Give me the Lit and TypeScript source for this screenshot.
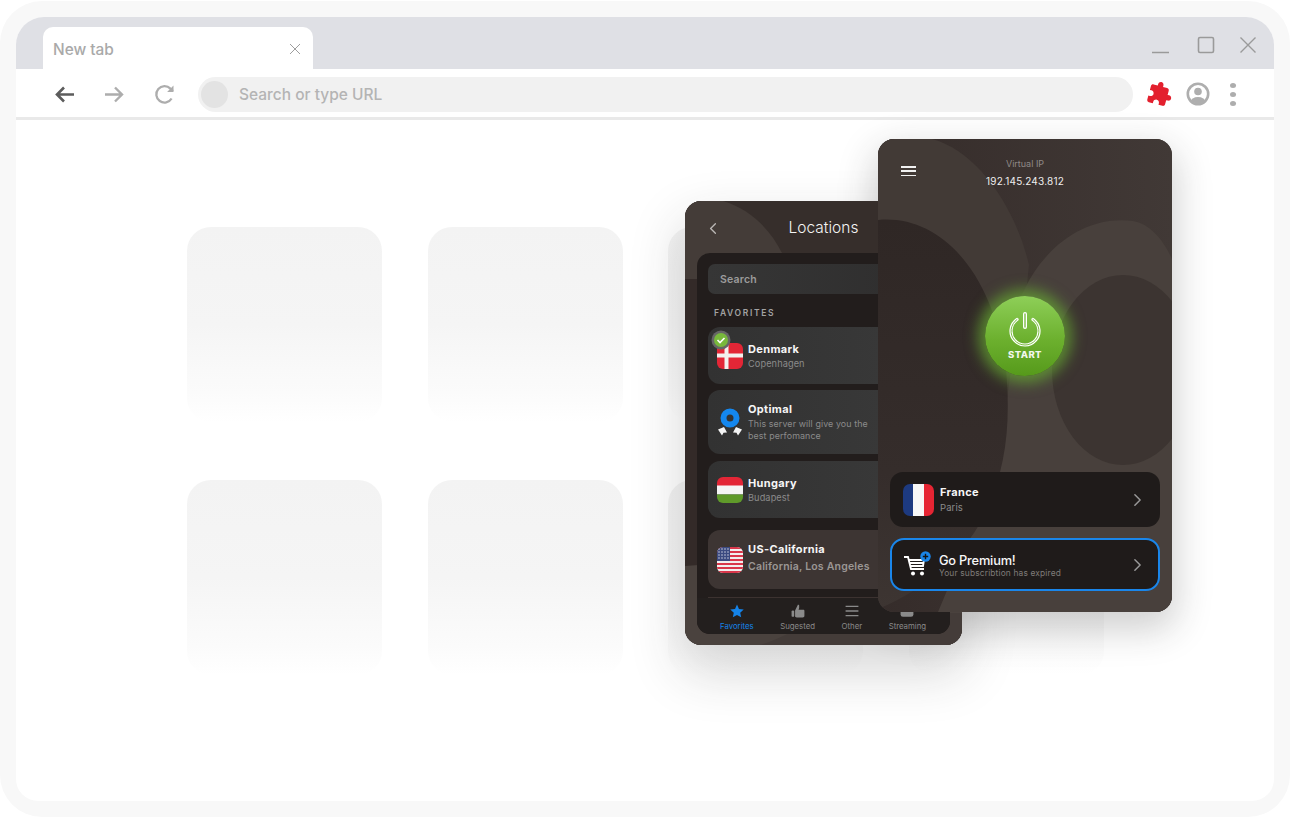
import { LitElement, html, css, svg } from "lit";
import { customElement } from "lit/decorators.js";

const chevron = (cls: string) => html`<svg class=${cls} viewBox="0 0 10 16" fill="none" stroke="currentColor" stroke-width="1.7" stroke-linecap="round" stroke-linejoin="round"><path d="M2 2l6 6-6 6"/></svg>`;

const flagDk = html`<svg class="flag" viewBox="0 0 26 26"><defs><clipPath id="fd"><rect width="26" height="26" rx="6"/></clipPath></defs><g clip-path="url(#fd)"><rect width="26" height="26" fill="#e32636"/><rect x="7.5" width="4" height="26" fill="#f3f0ee"/><rect y="10.5" width="26" height="4" fill="#f3f0ee"/></g></svg>`;
const flagHu = html`<svg class="flag" viewBox="0 0 26 26"><defs><clipPath id="fh"><rect width="26" height="26" rx="6"/></clipPath></defs><g clip-path="url(#fh)"><rect width="26" height="9" fill="#e32636"/><rect y="8.5" width="26" height="9" fill="#f5f5f5"/><rect y="17.5" width="26" height="9" fill="#5f9a2a"/></g></svg>`;
const flagUs = html`<svg class="flag" viewBox="0 0 26 26"><defs><clipPath id="fu"><rect width="26" height="26" rx="6"/></clipPath></defs><g clip-path="url(#fu)"><rect width="26" height="26" fill="#f1eeee"/>${[0, 4, 8, 12, 16, 20, 24].map((y) => svg`<rect y=${y} width="26" height="2" fill="#d9364a"/>`)}<rect width="13" height="14" fill="#3b4a80"/>${[2, 5, 8, 11].map((y) => [2, 5, 8, 11].map((x) => svg`<circle cx=${x} cy=${y} r=".7" fill="#e6e6ee"/>`))}</g></svg>`;
const flagFr = html`<svg class="flag-lg" viewBox="0 0 31 32"><defs><clipPath id="ff"><rect width="31" height="32" rx="7"/></clipPath></defs><g clip-path="url(#ff)"><rect width="10" height="32" fill="#1d3a80"/><rect x="10" width="11" height="32" fill="#f7f7f7"/><rect x="21" width="10" height="32" fill="#e62533"/></g></svg>`;

@customElement("app-root")
export class AppRoot extends LitElement {
  static styles = css`
    :host { display: block; width: 1290px; height: 817px; background: #fff; overflow: hidden; font-family: Inter, "Liberation Sans", sans-serif; }
    .frame { box-sizing: border-box; margin-top: 1px; height: 816px; padding: 16px 16px 16px; background: #f8f8f8; border-radius: 42px; }
    .window { height: 784px; background: #fff; border-radius: 28px 28px 22px 22px; overflow: hidden; display: flex; flex-direction: column; }

    .strip { height: 52px; flex: none; box-sizing: border-box; background: #dfe0e5; padding: 10px 0 0 27px; display: flex; }
    .tab { width: 270px; height: 42px; box-sizing: border-box; background: #fff; border-radius: 10px 10px 0 0; display: flex; align-items: center; justify-content: space-between; padding: 2px 11px 0 10px; color: #a9a9a9; font-size: 15.4px; font-weight: 500; }
    .tab svg { width: 14px; height: 14px; }
    .controls { margin-left: auto; display: flex; align-items: flex-start; color: #9a9a9a; padding: 9px 17px 0 0; gap: 27px; }
    .controls svg { display: block; }
    .ctl-min { width: 19px; height: 18px; }
    .ctl-max { width: 18px; height: 18px; }
    .ctl-close { width: 18px; height: 18px; margin-left: -3px; }

    .toolbar { height: 46px; padding-top: 2px; flex: none; display: flex; align-items: center; border-bottom: 3px solid #e9e9e9; }
    .nav { width: 21px; height: 21px; flex: none; }
    .nav.back { margin-left: 38px; color: #5c5c5c; }
    .nav.fwd { margin-left: 29px; color: #adadad; }
    .nav.reload { margin-left: 29px; color: #adadad; }
    .omni { margin-left: 23px; width: 935px; height: 35px; border-radius: 18px; background: #f1f1f1; display: flex; align-items: center; padding-left: 3px; box-sizing: border-box; color: #b4b4b4; font-size: 15.5px; font-weight: 500; gap: 11px; }
    .omni i { display: block; width: 27px; height: 27px; border-radius: 50%; background: #e3e3e3; }
    .ext { width: 26px; height: 26px; margin-left: 14px; transform: rotate(15deg); color: #e3202e; }
    .avatar { width: 24px; height: 24px; margin-left: 13px; color: #aeaeae; }
    .dots { margin-left: 20px; display: flex; flex-direction: column; gap: 4px; }
    .dots i { display: block; width: 6px; height: 5px; border-radius: 50%; background: #adadad; }

    .stage { flex: 1; position: relative; padding: 107px 0 0 171px; }
    .tiles { display: grid; grid-template-columns: repeat(4, 195px); grid-auto-rows: 195px; column-gap: 45.5px; row-gap: 58px; }
    .tile { border-radius: 24px; background: linear-gradient(#f3f3f3, #f5f5f5 50%, #fbfbfb 85%, #fff); }

    .phone { position: absolute; background: #443c39; display: flex; flex-direction: column; overflow: hidden; box-sizing: border-box; }
    .phone > * { position: relative; }
    .phone > svg.bg { position: absolute; left: 0; top: 0; width: 100%; height: 100%; }
    .shadow { position: absolute; border-radius: 18px; box-shadow: 0 24px 50px 6px rgba(40, 40, 40, .17); }
    .left-s { left: 669px; top: 81px; width: 277px; height: 444px; }
    .right-s { left: 862px; top: 19px; width: 294px; height: 473px; box-shadow: 0 14px 36px 4px rgba(40, 40, 40, .22); }
    .left { left: 669px; top: 81px; width: 277px; height: 444px; border-radius: 16px; color: #fff; }
    .right { left: 862px; top: 19px; width: 294px; height: 473px; border-radius: 16px; color: #fff; }

    .lhead { height: 52px; flex: none; display: grid; grid-template-columns: 1fr auto 1fr; align-items: center; font-size: 15.5px; font-weight: 300; padding: 1px 24px 0; box-sizing: border-box; }
    .lhead span { color: #f4f4f4; }
    .back-ch { width: 8px; height: 13px; color: #b9b6b4; transform: scaleX(-1); margin-top: 2px; }
    .panel { margin: 0 12px; height: 381px; background: #221d1c; border-radius: 13px; box-sizing: border-box; padding: 11px 0 0 11px; overflow: hidden; display: flex; flex-direction: column; }
    .search { height: 30px; flex: none; width: 231px; box-sizing: border-box; border-radius: 7px; background: linear-gradient(90deg, #363636, #2e2d2d); color: #9c9c9c; font-size: 10.5px; font-weight: 600; display: flex; align-items: center; padding-left: 12px; letter-spacing: .2px; }
    .fav { flex: none; margin: 14px 0 0 6px; height: 11px; line-height: 11px; font-size: 8.5px; font-weight: 600; letter-spacing: 1.65px; color: #a3a3a3; }
    .row { flex: none; width: 231px; box-sizing: border-box; border-radius: 12px; background: linear-gradient(90deg, #323232, #3a3a3a); display: flex; align-items: center; gap: 5px; padding-left: 9px; position: relative; }
    .r-dk { height: 57px; margin-top: 8px; }
    .r-op { height: 64px; margin-top: 6px; }
    .r-hu { height: 57px; margin-top: 7px; }
    .r-us { height: 59px; margin-top: 12px; background: #3d3533; }
    .flag { width: 26px; height: 26px; display: block; flex: none; }
    .flag-lg { width: 31px; height: 32px; display: block; flex: none; }
    .medal { width: 26px; height: 30px; display: block; flex: none; }
    .r-dk .flag { margin-top: 1px; }
    .badge { position: absolute; left: 3px; top: 3px; width: 20px; height: 20px; display: block; }
    .name { font-size: 11px; font-weight: 700; letter-spacing: .35px; color: #f6f6f6; line-height: 14px; white-space: nowrap; }
    .sub { font-size: 9.2px; color: #8b8b8b; line-height: 12px; margin-top: 2px; white-space: nowrap; letter-spacing: .1px; }
    .r-op .sub { width: 124px; white-space: normal; margin-top: 2px; font-size: 8.9px; line-height: 12.5px; }
    .r-us .name { margin-top: -4px; }
    .r-us .sub { font-size: 10.5px; font-weight: 600; color: #9b9795; letter-spacing: .2px; margin-top: 5px; }
    .sep { flex: none; margin: 8px 0 0 0; height: 1px; width: 231px; background: #3c3230; }
    .tabs { flex: 1; margin-left: -11px; background: #231f1e; display: flex; gap: 26.5px; padding-left: 23px; }
    .ti { display: flex; flex-direction: column; align-items: center; font-size: 7.8px; color: #8a8a8a; white-space: nowrap; }
    .ti svg { width: 14px; height: 14px; display: block; margin-top: 6px; margin-bottom: 3px; }
    .ti.on { color: #1583e8; }

    .rhead { flex: none; display: grid; grid-template-columns: 1fr auto 1fr; padding: 19px 23px 0; height: 48px; box-sizing: border-box; text-align: center; }
    .burger { width: 15px; display: flex; flex-direction: column; gap: 2.5px; padding-top: 8px; }
    .burger i { display: block; height: 1.8px; background: #f1f1f1; }
    .vip { font-size: 9px; line-height: 12px; color: #8f8a87; }
    .ip { font-size: 10px; line-height: 12px; margin-top: 5px; color: #eeeeee; letter-spacing: .2px; }
    .power { flex: none; align-self: center; margin-top: 109px; width: 80px; height: 80px; border-radius: 50%; background: linear-gradient(#8ecf58, #6cb02e 55%, #569a1b); box-shadow: 0 0 14px 7px rgba(104, 176, 50, .68); display: flex; flex-direction: column; align-items: center; }
    .power svg { width: 36px; height: 36px; margin-top: 15px; display: block; }
    .power span { font-size: 9.5px; font-weight: 800; letter-spacing: .4px; color: #f2f7ee; margin-top: 2px; line-height: 12px; }
    .cards { margin-top: auto; padding: 0 12px 21px; display: flex; flex-direction: column; gap: 11px; }
    .card { height: 55px; box-sizing: border-box; border-radius: 13px; background: #1f1b1a; display: flex; align-items: center; padding: 0 18px 0 13px; color: #8e8b89; }
    .card.prem { height: 53px; border: 2px solid #1a86ea; padding: 0 16px 0 11px; border-radius: 14px; }
    .ctext { margin-left: 6px; flex: 1; }
    .ctext .name { line-height: 14px; }
    .ctext .sub { font-size: 9.5px; margin-top: 3px; }
    .cart { width: 29px; height: 27px; display: block; flex: none; }
    .ptext { margin-left: 7px; flex: 1; padding-top: 1px; }
    .ptitle { font-size: 12.8px; font-weight: 500; color: #f7f7f7; line-height: 15px; letter-spacing: -.2px; }
    .psub { font-size: 8.4px; color: #7f7b79; line-height: 10px; margin-top: 0; letter-spacing: .15px; }
    .ch { width: 9px; height: 14px; color: #999; flex: none; display: block; }
  `;

  render() {
    return html`
      <div class="frame"><div class="window">
        <div class="strip">
          <div class="tab">New tab
            <svg viewBox="0 0 14 14" fill="none" stroke="#9e9e9e" stroke-width="1"><path d="M2 2l10 10M12 2L2 12"/></svg>
          </div>
          <div class="controls">
            <svg class="ctl-min" viewBox="0 0 19 18" fill="none" stroke="currentColor" stroke-width="1.3"><path d="M1 16.5h17"/></svg>
            <svg class="ctl-max" viewBox="0 0 18 18" fill="none" stroke="currentColor" stroke-width="1.6"><rect x="1.5" y="1.5" width="15" height="15" rx="1.5"/></svg>
            <svg class="ctl-close" viewBox="0 0 18 18" fill="none" stroke="currentColor" stroke-width="1.4"><path d="M1.5 1.5l15 15M16.5 1.5l-15 15"/></svg>
          </div>
        </div>
        <div class="toolbar">
          <svg class="nav back" viewBox="0 0 21 21" fill="none" stroke="currentColor" stroke-width="2.6"><path d="M20 10.5H3M10 3.5l-7 7 7 7"/></svg>
          <svg class="nav fwd" viewBox="0 0 21 21" fill="none" stroke="currentColor" stroke-width="2.4"><path d="M1 10.5h17M11 3.5l7 7-7 7"/></svg>
          <svg class="nav reload" viewBox="0 0 21 21" fill="none" stroke="currentColor" stroke-width="2.3"><path d="M17.6 14.5A8.2 8.2 0 1 1 16.4 4.6L19 7"/><path d="M19.5 1.5V8h-6.4" stroke-width="0" fill="currentColor"/></svg>
          <div class="omni"><i></i>Search or type URL</div>
          <svg class="ext" viewBox="0 0 24 24" fill="currentColor"><path d="M20.5 11H19V7c0-1.1-.9-2-2-2h-4V3.5C13 2.12 11.88 1 10.5 1S8 2.12 8 3.5V5H4c-1.1 0-1.99.9-1.99 2v3.8H3.5c1.49 0 2.7 1.21 2.7 2.7s-1.21 2.7-2.7 2.7H2V20c0 1.1.9 2 2 2h3.8v-1.5c0-1.49 1.21-2.7 2.7-2.7 1.49 0 2.7 1.21 2.7 2.7V22H17c1.1 0 2-.9 2-2v-4h1.5c1.38 0 2.5-1.12 2.5-2.5S21.88 11 20.5 11z"/></svg>
          <svg class="avatar" viewBox="0 0 24 24"><defs><clipPath id="av"><circle cx="12" cy="12" r="9.5"/></clipPath></defs><circle cx="12" cy="12" r="10.2" fill="none" stroke="currentColor" stroke-width="2.6"/><circle cx="12" cy="9.5" r="3.8" fill="currentColor"/><ellipse cx="12" cy="20" rx="7.5" ry="5" fill="currentColor" clip-path="url(#av)"/></svg>
          <div class="dots"><i></i><i></i><i></i></div>
        </div>
        <div class="stage">
          <div class="tiles">${Array.from({ length: 8 }, () => html`<div class="tile"></div>`)}</div>
          <div class="shadow left-s"></div>
          <div class="shadow right-s"></div>
          ${this.leftPhone()}
          ${this.rightPhone()}
        </div>
      </div></div>`;
  }

  leftPhone() {
    return html`<div class="phone left">
      <svg class="bg" viewBox="0 0 277 444" preserveAspectRatio="none">
        <rect width="277" height="444" fill="#362e2b"/>
        <path d="M0 0H38C65 8 85 28 97 52L100 78H0Z" fill="#443c38"/>
        <rect y="78" width="12" height="300" fill="#332a28"/>
        <path d="M0 365L277 345V444H0Z" fill="#4a423e"/>
        <path d="M75 444C95 438 115 428 135 412L277 412V444Z" fill="#443c39"/>
      </svg>
      <div class="lhead">
        ${chevron("back-ch")}
        <span>Locations</span>
      </div>
      <div class="panel">
        <div class="search">Search</div>
        <div class="fav">FAVORITES</div>
        <div class="row r-dk">
          ${flagDk}
          <div><div class="name">Denmark</div><div class="sub">Copenhagen</div></div>
          <svg class="badge" viewBox="0 0 20 20"><circle cx="10" cy="10" r="9.5" fill="#666"/><circle cx="10" cy="10" r="7" fill="#78b83c"/><path d="M6.5 10l2.5 2.5 4.5-4.5" fill="none" stroke="#fff" stroke-width="1.6"/></svg>
        </div>
        <div class="row r-op">
          <svg class="medal" viewBox="0 0 26 30"><path d="M1 22.5l6-2.5 3 5.5-3.5.3-1.5 2.7zM25 22.5l-6-2.5-3 5.5 3.5.3 1.5 2.7z" fill="#f4f4f4"/><circle cx="13" cy="11" r="6.5" fill="none" stroke="#1487ee" stroke-width="6"/></svg>
          <div><div class="name">Optimal</div><div class="sub">This server will give you the best perfomance</div></div>
        </div>
        <div class="row r-hu">
          ${flagHu}
          <div><div class="name">Hungary</div><div class="sub">Budapest</div></div>
        </div>
        <div class="row r-us">
          ${flagUs}
          <div><div class="name">US-California</div><div class="sub">California, Los Angeles</div></div>
        </div>
        <div class="sep"></div>
        <div class="tabs">
          <div class="ti on"><svg viewBox="0 0 24 24" fill="currentColor"><path d="M12 1l3.4 7.4 8.1.9-6 5.5 1.7 8L12 18.7 4.8 22.8l1.7-8-6-5.5 8.1-.9z"/></svg>Favorites</div>
          <div class="ti"><svg viewBox="0 0 24 24" fill="#8a8a8a"><path d="M12 1l2 1v5l-1 3h8c1.5 0 2 1 2 2v8c0 1.5-1 3-3 3H10c-2 0-3-1-3-2V11z"/><rect x="1" y="11" width="4.5" height="11" rx="2"/></svg>Sugested</div>
          <div class="ti"><svg viewBox="0 0 24 24" fill="none" stroke="#8a8a8a" stroke-width="2.4"><path d="M1 4h22M1 12h22M1 20h22"/></svg>Other</div>
          <div class="ti"><svg viewBox="0 0 24 24"><rect x="1" y="2" width="22" height="20" rx="4" fill="#8a8a8a"/></svg>Streaming</div>
        </div>
      </div>
    </div>`;
  }

  rightPhone() {
    return html`<div class="phone right">
      <svg class="bg" viewBox="0 0 294 473" preserveAspectRatio="none">
        <defs>
          <linearGradient id="da" x1="0" y1="0" x2="0" y2="1"><stop offset="0" stop-color="#2f2725"/><stop offset=".65" stop-color="#352d2b"/><stop offset="1" stop-color="#3d3532"/></linearGradient>
          <linearGradient id="base" x1="0" y1="0" x2="1" y2="0"><stop offset="0" stop-color="#352c2a"/><stop offset="1" stop-color="#413936"/></linearGradient>
        </defs>
        <rect width="294" height="473" fill="url(#base)"/>
        <path d="M0 0H54C100 12 138 70 151 126L130 330H0Z" fill="#423a36"/>
        <path d="M142 160C165 105 210 76 255 82C272 85 285 100 294 120V473H60L120 330Z" fill="#48403c"/>
        <path d="M0 81C60 75 115 130 128 230C133 285 128 330 108 372C92 410 50 450 0 470Z" fill="url(#da)"/>
        <ellipse cx="245" cy="231" rx="71" ry="95" fill="#3c3431"/>
      </svg>
      <div class="rhead">
        <div class="burger"><i></i><i></i><i></i></div>
        <div><div class="vip">Virtual IP</div><div class="ip">192.145.243.812</div></div>
      </div>
      <div class="power">
        <svg viewBox="0 0 36 36" fill="none" stroke-linecap="round">
          <path d="M10 8.5A14 14 0 1 0 26 8.5" stroke="#fff" stroke-width="3.2"/>
          <path d="M10 8.5A14 14 0 1 0 26 8.5" stroke="#7cbc42" stroke-width="1"/>
          <path d="M18 3V16" stroke="#fff" stroke-width="4"/>
          <path d="M18 3V16" stroke="#7cbc42" stroke-width="1.4"/>
        </svg>
        <span>START</span>
      </div>
      <div class="cards">
        <div class="card">
          ${flagFr}
          <div class="ctext"><div class="name">France</div><div class="sub">Paris</div></div>
          ${chevron("ch")}
        </div>
        <div class="card prem">
          <svg class="cart" viewBox="0 0 29 27" fill="none" stroke="#fff" stroke-width="1.9">
            <path d="M1 6h4l3 12h13"/><path d="M6 9h15l-1 6H8M6.5 12h14"/>
            <circle cx="10" cy="22.5" r="2" fill="#fff" stroke="none"/><circle cx="19" cy="22.5" r="2" fill="#fff" stroke="none"/>
            <circle cx="22.5" cy="5.5" r="5.2" fill="#1a86ea" stroke="none"/><path d="M22.5 2.8v5.4M19.8 5.5h5.4" stroke="#151515" stroke-width="1.4"/>
          </svg>
          <div class="ptext"><div class="ptitle">Go Premium!</div><div class="psub">Your subscribtion has expired</div></div>
          ${chevron("ch")}
        </div>
      </div>
    </div>`;
  }
}
